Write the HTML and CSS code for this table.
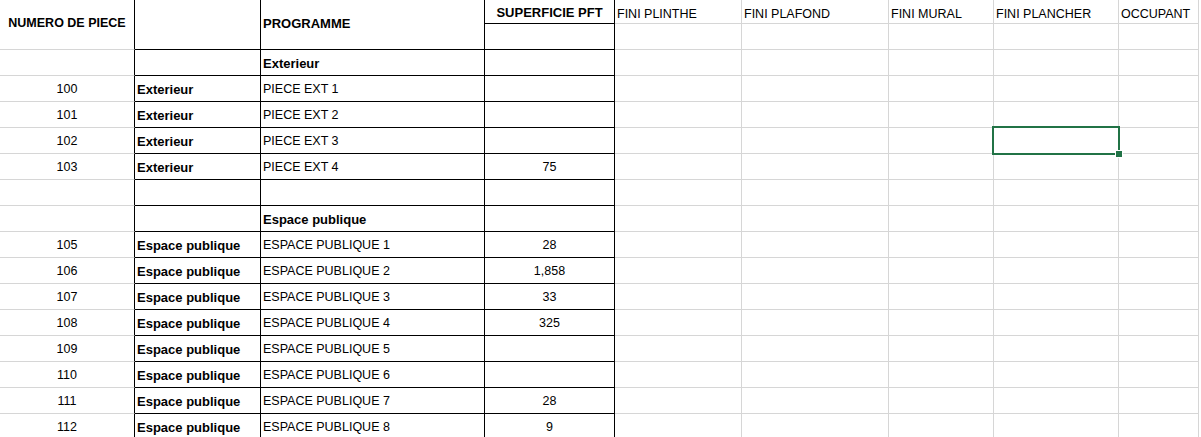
FILE: index.html
```html
<!DOCTYPE html>
<html>
<head>
<meta charset="utf-8">
<link rel="stylesheet" href="styles.css">
</head>
<body>
<div class="sheet">
  <div class="c a hd span2 center bold">NUMERO DE PIECE</div>
  <div class="c b span2"></div>
  <div class="c b span2 bold hdl">PROGRAMME</div>
  <div class="c b center bold">SUPERFICIE PFT</div>
  <div class="c g bottom">FINI PLINTHE</div>
  <div class="c g bottom">FINI PLAFOND</div>
  <div class="c g bottom">FINI MURAL</div>
  <div class="c g bottom">FINI PLANCHER</div>
  <div class="c g bottom">OCCUPANT</div>
  <div class="c b"></div>
  <div class="c g"></div><div class="c g"></div><div class="c g"></div><div class="c g"></div><div class="c g"></div>

  <div class="c a"></div><div class="c b"></div><div class="c b bold">Exterieur</div><div class="c b"></div>
  <div class="c g"></div><div class="c g"></div><div class="c g"></div><div class="c g"></div><div class="c g"></div>

  <div class="c a center">100</div><div class="c b bold">Exterieur</div><div class="c b">PIECE EXT 1</div><div class="c b center"></div>
  <div class="c g"></div><div class="c g"></div><div class="c g"></div><div class="c g"></div><div class="c g"></div>

  <div class="c a center">101</div><div class="c b bold">Exterieur</div><div class="c b">PIECE EXT 2</div><div class="c b center"></div>
  <div class="c g"></div><div class="c g"></div><div class="c g"></div><div class="c g"></div><div class="c g"></div>

  <div class="c a center">102</div><div class="c b bold">Exterieur</div><div class="c b">PIECE EXT 3</div><div class="c b center"></div>
  <div class="c g"></div><div class="c g"></div><div class="c g"></div><div class="c g sel"><span class="selbox"><span class="handle"></span></span></div><div class="c g"></div>

  <div class="c a center">103</div><div class="c b bold">Exterieur</div><div class="c b">PIECE EXT 4</div><div class="c b center">75</div>
  <div class="c g"></div><div class="c g"></div><div class="c g"></div><div class="c g"></div><div class="c g"></div>

  <div class="c a"></div><div class="c b"></div><div class="c b"></div><div class="c b"></div>
  <div class="c g"></div><div class="c g"></div><div class="c g"></div><div class="c g"></div><div class="c g"></div>

  <div class="c a"></div><div class="c b"></div><div class="c b bold">Espace publique</div><div class="c b"></div>
  <div class="c g"></div><div class="c g"></div><div class="c g"></div><div class="c g"></div><div class="c g"></div>

  <div class="c a center">105</div><div class="c b bold">Espace publique</div><div class="c b">ESPACE PUBLIQUE 1</div><div class="c b center">28</div>
  <div class="c g"></div><div class="c g"></div><div class="c g"></div><div class="c g"></div><div class="c g"></div>

  <div class="c a center">106</div><div class="c b bold">Espace publique</div><div class="c b">ESPACE PUBLIQUE 2</div><div class="c b center">1,858</div>
  <div class="c g"></div><div class="c g"></div><div class="c g"></div><div class="c g"></div><div class="c g"></div>

  <div class="c a center">107</div><div class="c b bold">Espace publique</div><div class="c b">ESPACE PUBLIQUE 3</div><div class="c b center">33</div>
  <div class="c g"></div><div class="c g"></div><div class="c g"></div><div class="c g"></div><div class="c g"></div>

  <div class="c a center">108</div><div class="c b bold">Espace publique</div><div class="c b">ESPACE PUBLIQUE 4</div><div class="c b center">325</div>
  <div class="c g"></div><div class="c g"></div><div class="c g"></div><div class="c g"></div><div class="c g"></div>

  <div class="c a center">109</div><div class="c b bold">Espace publique</div><div class="c b">ESPACE PUBLIQUE 5</div><div class="c b center"></div>
  <div class="c g"></div><div class="c g"></div><div class="c g"></div><div class="c g"></div><div class="c g"></div>

  <div class="c a center">110</div><div class="c b bold">Espace publique</div><div class="c b">ESPACE PUBLIQUE 6</div><div class="c b center"></div>
  <div class="c g"></div><div class="c g"></div><div class="c g"></div><div class="c g"></div><div class="c g"></div>

  <div class="c a center">111</div><div class="c b bold">Espace publique</div><div class="c b">ESPACE PUBLIQUE 7</div><div class="c b center">28</div>
  <div class="c g"></div><div class="c g"></div><div class="c g"></div><div class="c g"></div><div class="c g"></div>

  <div class="c a center">112</div><div class="c b bold">Espace publique</div><div class="c b">ESPACE PUBLIQUE 8</div><div class="c b center">9</div>
  <div class="c g"></div><div class="c g"></div><div class="c g"></div><div class="c g"></div><div class="c g"></div>
</div>
</body>
</html>
```
FILE: styles.css
```css
html, body {
  margin: 0;
  padding: 0;
  background: #fff;
  overflow: hidden;
}
.sheet {
  display: grid;
  grid-template-columns: 135px 126px 224px 130px 127px 147px 105px 125px 80px;
  grid-template-rows: 24px 26px repeat(15, 26px);
  width: 1199px;
  font-family: "Liberation Sans", Arial, sans-serif;
  font-size: 12.5px;
  line-height: 15px;
  color: #000;
}
.c {
  box-sizing: border-box;
  display: flex;
  align-items: center;
  padding: 1px 2px 0;
  white-space: nowrap;
  overflow: visible;
  border-right: 1px solid #000;
  border-bottom: 1px solid #000;
}
.a {
  border-bottom-color: #d6d6d6;
}
.g {
  border-right-color: #d6d6d6;
  border-bottom-color: #d6d6d6;
}
.span2 {
  grid-row: span 2;
}
.center {
  justify-content: center;
}
.bold {
  font-weight: bold;
  font-size: 13px;
}
.hd {
  padding-top: 0;
  padding-bottom: 2px;
  font-size: 12.5px;
}
.hdl {
  padding-top: 0;
  padding-bottom: 2px;
}
.bottom {
  align-items: flex-end;
  padding-top: 0;
  padding-bottom: 1px;
}
.sel {
  position: relative;
}
.selbox {
  position: absolute;
  left: -2px;
  top: -2px;
  right: -2px;
  bottom: -2px;
  border: 2px solid #217346;
  box-sizing: border-box;
}
.handle {
  position: absolute;
  right: -4px;
  bottom: -4px;
  width: 6px;
  height: 6px;
  background: #217346;
  box-shadow: 0 0 0 1px #fff;
}
```
